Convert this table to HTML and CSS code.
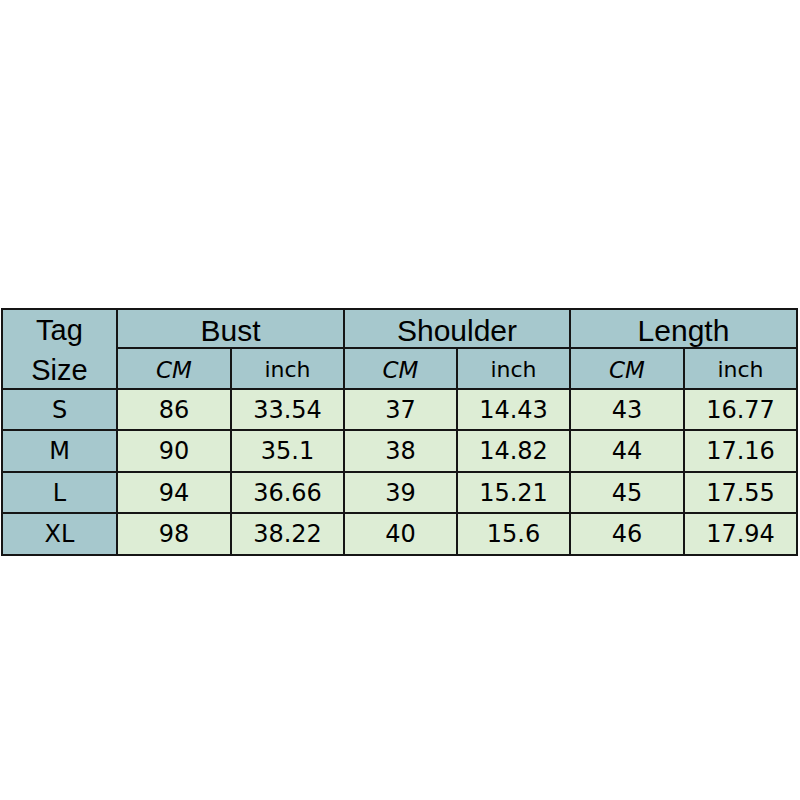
FILE: index.html
```html
<!DOCTYPE html>
<html>
<head>
<meta charset="utf-8">
<link rel="stylesheet" href="styles.css">
</head>
<body>
<div class="chart">
  <div class="cell hd tag">Tag<br>Size</div>
  <div class="cell hd group g1">Bust</div>
  <div class="cell hd group g2">Shoulder</div>
  <div class="cell hd group g3">Length</div>
  <div class="cell hd unit cm">CM</div>
  <div class="cell hd unit">inch</div>
  <div class="cell hd unit cm">CM</div>
  <div class="cell hd unit">inch</div>
  <div class="cell hd unit cm">CM</div>
  <div class="cell hd unit">inch</div>

  <div class="cell hd size">S</div>
  <div class="cell num">86</div><div class="cell num">33.54</div>
  <div class="cell num">37</div><div class="cell num">14.43</div>
  <div class="cell num">43</div><div class="cell num">16.77</div>

  <div class="cell hd size">M</div>
  <div class="cell num">90</div><div class="cell num">35.1</div>
  <div class="cell num">38</div><div class="cell num">14.82</div>
  <div class="cell num">44</div><div class="cell num">17.16</div>

  <div class="cell hd size">L</div>
  <div class="cell num">94</div><div class="cell num">36.66</div>
  <div class="cell num">39</div><div class="cell num">15.21</div>
  <div class="cell num">45</div><div class="cell num">17.55</div>

  <div class="cell hd size">XL</div>
  <div class="cell num">98</div><div class="cell num">38.22</div>
  <div class="cell num">40</div><div class="cell num">15.6</div>
  <div class="cell num">46</div><div class="cell num">17.94</div>
</div>
</body>
</html>
```

FILE: styles.css
```css
html, body {
  margin: 0;
  padding: 0;
  background: #ffffff;
}

body {
  width: 800px;
  height: 800px;
}

.chart {
  margin: 308px 0 0 1px;
  width: 797px;
  box-sizing: border-box;
  display: grid;
  grid-template-columns: 113px 112px 111px 111px 111px 112px 111px;
  grid-template-rows: 37px 39px 39px 40px 39px 40px;
  gap: 2px;
  padding: 2px;
  background: #151515;
}

.cell {
  display: flex;
  align-items: center;
  justify-content: center;
  color: #000000;
  text-align: center;
  font-family: "DejaVu Sans", Verdana, sans-serif;
  font-size: 24px;
}

.hd {
  background: #a6c8cd;
}

.num {
  background: #ddedd5;
}

.tag {
  grid-row: span 2;
  font-family: "Liberation Sans", Arial, sans-serif;
  font-size: 29px;
  line-height: 40px;
  padding-top: 2px;
}

.group {
  grid-column: span 2;
  font-family: "Liberation Sans", Arial, sans-serif;
  font-size: 30px;
  padding-top: 4px;
}

.unit {
  font-size: 22px;
  padding-top: 2px;
}

.cm {
  font-style: oblique;
  font-size: 23px;
}

.size {
  font-size: 24px;
}
```
